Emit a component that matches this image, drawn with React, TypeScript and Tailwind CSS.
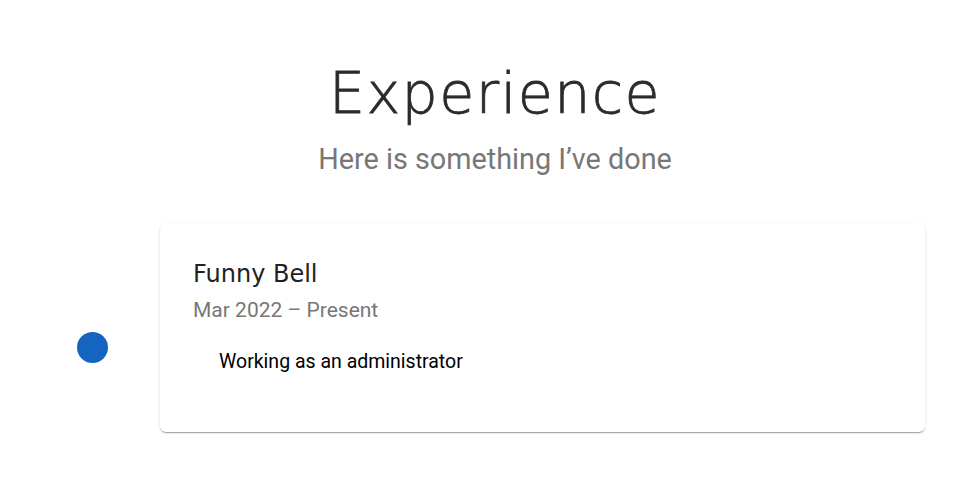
export default function App() {
  return (
    <div className="min-h-screen w-full bg-white" style={{ fontFamily: "Roboto, sans-serif" }}>
      {/* header */}
      <div className="flex flex-col items-center pl-[29px] pt-[59px]">
        <h1
          className="text-[57px] leading-[68px] font-extralight tracking-[1.4px] text-[#2b2b2b] [-webkit-text-stroke:0.8px_#2b2b2b]"
          style={{ fontFamily: '"DejaVu Sans", sans-serif' }}
        >
          Experience
        </h1>
        <p className="mt-[14px] text-[28.8px] leading-[36px] text-[#777]">Here is something I’ve done</p>
      </div>

      {/* timeline item */}
      <div className="mt-[46px] flex items-start">
        <div className="flex w-[160px] pl-[77px] pt-[109px]">
          <span className="block h-[31px] w-[31px] rounded-full bg-[#1565c0]" />
        </div>
        <div className="h-[209px] w-[765px] rounded-[6px] bg-white px-[33px] pt-[36px] shadow-[0_2px_1px_-1px_rgba(0,0,0,0.2),0_1px_1px_0_rgba(0,0,0,0.14),0_1px_3px_0_rgba(0,0,0,0.12)]">
          <h2 className="text-[24px] leading-[30px] text-[#222]" style={{ fontFamily: '"DejaVu Sans", sans-serif' }}>
            Funny Bell
          </h2>
          <p className="mt-[7px] text-[21px] leading-[28px] text-[#777]">Mar 2022 – Present</p>
          <p className="mt-[25px] pl-[26px] text-[19.5px] leading-[26px] text-black">Working as an administrator</p>
        </div>
      </div>
    </div>
  );
}
